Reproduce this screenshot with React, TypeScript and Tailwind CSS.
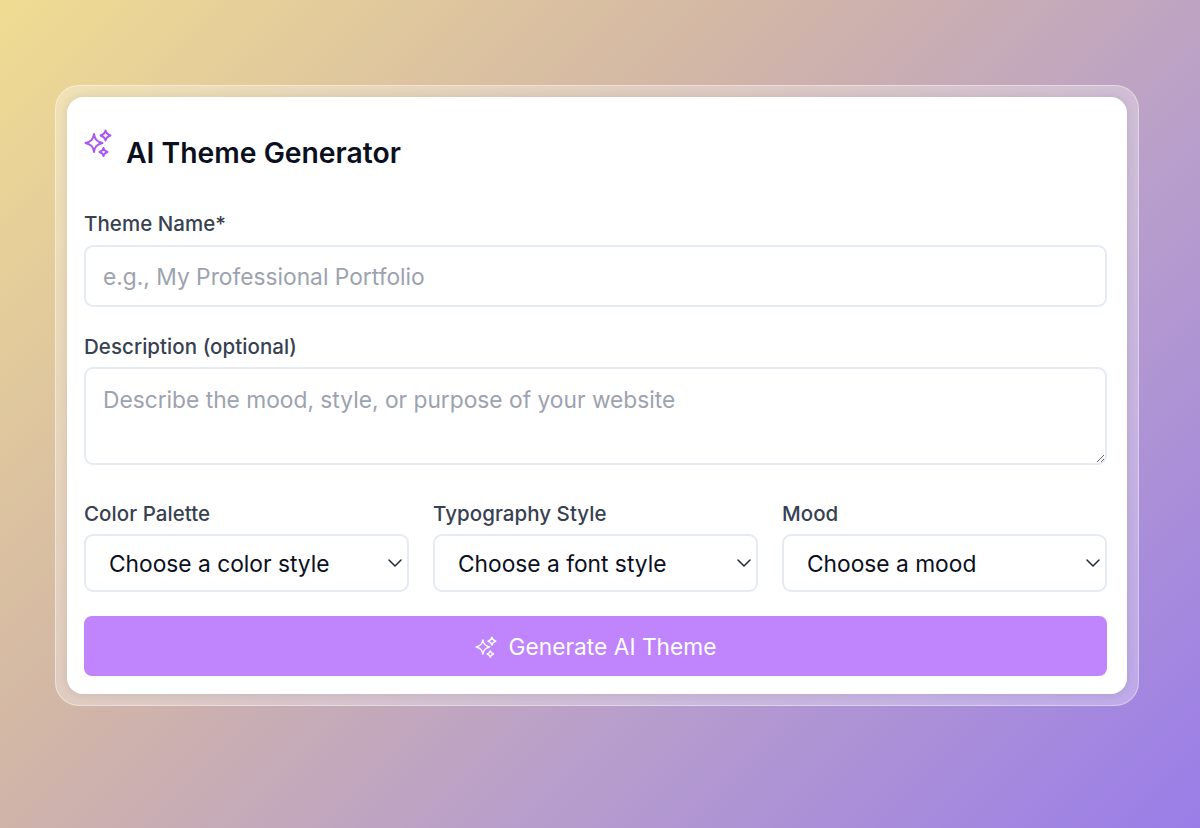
import { ChevronDown } from 'lucide-react'

function SparkIcon({ className }: { className: string }) {
  return (
    <svg viewBox="0 0 28 28" fill="none" stroke="currentColor" strokeWidth="1.9" strokeLinejoin="round" className={className}>
      <path d="M10 5 C10.8 10 12.5 12.4 18.5 14 C12.5 15.6 10.8 18 10 23 C9.2 18 7.5 15.6 1.5 14 C7.5 12.4 9.2 10 10 5Z" />
      <path d="M21.5 1.5 C21.9 4 23 5.2 26.5 6.5 C23 7.8 21.9 9 21.5 11.5 C21.1 9 20 7.8 16.5 6.5 C20 5.2 21.1 4 21.5 1.5Z" />
      <path d="M19.5 19 C19.9 21 20.8 22 23.5 23 C20.8 24 19.9 25 19.5 27 C19.1 25 18.2 24 15.5 23 C18.2 22 19.1 21 19.5 19Z" />
    </svg>
  )
}

const selects = [
  { label: 'Color Palette', value: 'Choose a color style' },
  { label: 'Typography Style', value: 'Choose a font style' },
  { label: 'Mood', value: 'Choose a mood' },
]

export default function App() {
  return (
    <div className="min-h-[828px] pl-[55px] pt-[85px] bg-[linear-gradient(135deg,#f0dc92_0%,#d2b6a6_38%,#b89ecb_66%,#9a7de8_100%)] font-['Inter',sans-serif]">
      <div className="w-[1084px] p-[11px] rounded-[24px] bg-white/30 border border-white/40">
        <div className="bg-white rounded-[16px] pl-[17px] pr-[20px] pt-[29px] pb-[18px] shadow-[0_0_10px_rgba(0,0,0,0.1)]">
          <div className="flex items-start gap-[14px] h-[48px]">
            <SparkIcon className="w-[28px] h-[28px] text-[#a855f7] mt-[3px] shrink-0" />
            <h2 className="text-[28.3px] leading-[48px] font-semibold text-[#0b0f1e] mt-[3px]">AI Theme Generator</h2>
          </div>

          <label className="block mt-[36px] text-[20.5px] leading-[28px] font-[480] tracking-[0.05px] text-[#374151]">Theme Name*</label>
          <input
            placeholder="e.g., My Professional Portfolio"
            className="block w-full h-[62px] mt-[7px] px-[17px] border-2 border-[#e5eaf3] rounded-[9px] text-[22.75px] placeholder:text-[#9ca3af] outline-none"
          />

          <label className="block mt-[26px] text-[20.5px] leading-[28px] font-[480] tracking-[0.05px] text-[#374151]">Description (optional)</label>
          <textarea
            placeholder="Describe the mood, style, or purpose of your website"
            className="block w-full h-[98px] mt-[6px] px-[17px] py-[15px] border-2 border-[#e5eaf3] rounded-[9px] text-[22.75px] leading-[32px] placeholder:text-[#9ca3af] outline-none"
          />

          <div className="grid grid-cols-3 gap-[24px] mt-[35px]">
            {selects.map(({ label, value }) => (
              <div key={label}>
                <label className="block text-[20.5px] leading-[28px] font-[480] tracking-[0.05px] text-[#374151]">{label}</label>
                <div className="relative mt-[6px]">
                  <select className="block w-full h-[58px] pl-[23px] pr-[36px] pt-[2px] appearance-none bg-white border-2 border-[#e5eaf3] rounded-[9px] text-[22.75px] text-[#0b0f1e] outline-none">
                    <option>{value}</option>
                  </select>
                  <ChevronDown strokeWidth={1.5} className="absolute right-[2px] top-[17px] w-[24px] h-[24px] text-[#1f2937] pointer-events-none" />
                </div>
              </div>
            ))}
          </div>

          <button className="w-full h-[60px] mt-[24px] pt-[2px] flex items-center justify-center gap-[12px] bg-[#c084fc] rounded-[8px] text-white text-[22.75px]">
            <SparkIcon className="w-[22px] h-[22px]" />
            Generate AI Theme
          </button>
        </div>
      </div>
    </div>
  )
}
